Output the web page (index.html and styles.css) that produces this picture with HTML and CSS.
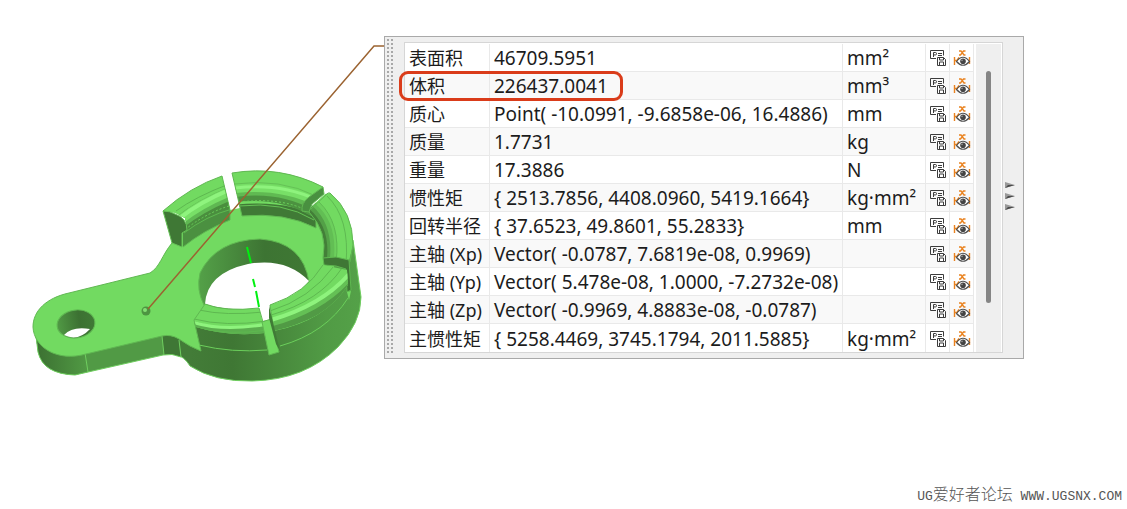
FILE: index.html
```html
<!DOCTYPE html>
<html lang="zh-CN">

<head>
    <meta charset="utf-8">
    <title>测量体</title>
    <link rel="stylesheet" href="styles.css">
</head>

<body>
    <svg width="0" height="0" class="Defs" aria-hidden="true">
        <symbol id="save" viewBox="0 0 18 18">
            <path d="M7 9.5H1.5v-8h13v5" fill="none" stroke="#3c3c3c" />
            <path d="M4.500 8V3.500h2q1 0 1 1.200t-1 1.200h-2M9 4.500h4M9 6.500h4" fill="none" stroke="#3c3c3c" />
            <path d="M8.500 8.500h6l2 2v6h-8z" fill="#fff" stroke="#3c3c3c" />
            <path d="M10.500 8.500v2.500h4v-2.500M10.500 16.500v-3.500h4v3.500" fill="none" stroke="#3c3c3c" />
        </symbol>
        <symbol id="eye" viewBox="0 0 18 18">
            <path d="M6 2h2l3 4h1.500M12.500 2h-2l-3 4H6M1.500 8v8M2 11.500h2l2-3M16.500 8v7" fill="none" stroke="#e9821f" stroke-width="1.400" />
            <path d="M3.500 12.500Q10 4 16.500 12.500Q10 20 3.500 12.500z" fill="#fff" stroke="#505050" stroke-width="1.200" />
            <circle cx="10" cy="12.300" r="2.800" fill="#444" />
            <circle cx="9" cy="11.400" r="0.800" fill="#999" />
        </symbol>
    </svg>
    <main class="Stage">
        <svg class="Model" viewBox="0 0 384 400" role="img" aria-label="零件模型">
            <defs>
                <linearGradient id="body" x1="190" x2="360" y1="0" y2="0" gradientUnits="userSpaceOnUse">
                    <stop offset="0" stop-color="#437c38" />
                    <stop offset="0.250" stop-color="#3f7734" />
                    <stop offset="0.800" stop-color="#519b45" />
                    <stop offset="1" stop-color="#54a148" />
                </linearGradient>
                <linearGradient id="arm" x1="37" x2="90" y1="0" y2="0" gradientUnits="userSpaceOnUse">
                    <stop offset="0" stop-color="#3c7132" />
                    <stop offset="1" stop-color="#529c45" />
                </linearGradient>
                <linearGradient id="bore" x1="198" x2="309" y1="0" y2="0" gradientUnits="userSpaceOnUse">
                    <stop offset="0" stop-color="#54a148" />
                    <stop offset="0.600" stop-color="#3d7433" />
                    <stop offset="1" stop-color="#3f7834" />
                </linearGradient>
                <linearGradient id="eyelet" x1="57" x2="95" y1="0" y2="0" gradientUnits="userSpaceOnUse">
                    <stop offset="0" stop-color="#519a45" />
                    <stop offset="0.600" stop-color="#3c7132" />
                    <stop offset="1" stop-color="#407936" />
                </linearGradient>
                <clipPath id="clipA"><path d="M163 211Q190 187 222 176L230 210V220Q204 230 183 247V232L187 228L185 218L175 213z" /></clipPath>
                <clipPath id="clipB"><path d="M232 173Q280 165 323 187L303 203L302 211L316 218V228Q285 212 242 216z" /></clipPath>
                <clipPath id="clipC"><path d="M330 193Q353 212 353 245L349 261L336 257L323 258Q328 232 309 212L311 207L325 194z" /></clipPath>
                <clipPath id="clipD"><path d="M323 265L347 270L348 285Q325 321 274 331L270 305Q306 293 323 265z" /></clipPath>
                <clipPath id="clipE"><path d="M205 304Q225 312 259 308L265 333Q228 337 196 327L194 320z" /></clipPath>
            </defs>

            <!-- side walls -->
            <path d="M178 330L176 355Q184 356 190 366Q215 382 252 381Q305 380 338 347Q361 323 361 297L353 240L300 200L200 260z" fill="url(#body)" stroke="#6fce5f" />
            <path d="M35 330L38 352Q43 374 75 375L88 372L163 355Q172 353 181 357L178 330z" fill="#519a45" />
            <path d="M35 330L38 352Q43 374 75 375L88 372L86 345z" fill="url(#arm)" />
            <path d="M162 334L164 355Q172 353 181 357L179 338z" fill="#3f7735" />
            <path d="M36 336L38 352Q43 374 75 375L88 372L163 355Q172 353 181 357M85 353L88 372M162 336L164 355M179 340L181 357" fill="none" stroke="#6fce5f" />

            <!-- arm and floor of the ring -->
            <path d="M33 327C33 311 46 298 69 293L150 273C160 267 162 255 172 243Q205 201 262 201Q320 206 336 248Q338 282 305 297L262 321L194 321L201 351Q190 347 179 339Q171 334 162 336L86 354C58 362 34 348 33 327z" fill="#72da61" />
            <path d="M172 243C162 255 160 267 150 273L69 293C46 298 33 311 33 327C34 348 58 362 86 354L162 336Q171 334 179 339Q190 347 201 351" fill="none" stroke="#60b852" />

            <!-- hole in the arm -->
            <ellipse cx="76" cy="324" rx="19" ry="14" fill="url(#eyelet)" stroke="#60b852" transform="rotate(-8 76 324)" />
            <path d="M64 335Q72 326 90 329Q78 342 64 335z" fill="#fff" />

            <!-- bore -->
            <path d="M204 305Q196 290 200 273Q216 240 260 239Q303 242 309 282L270 305L259 309Q225 312 204 305z" fill="url(#bore)" stroke="#60b852" />
            <path d="M205 304Q207 273 248 264Q286 257 309 281Q295 299 270 305L271 320L262 321L259 309Q225 311 205 304z" fill="#fff" />

            <!-- gap between the upper segments -->
            <path d="M221 176L234 172L240 208L230 210z" fill="#fff" />

            <!-- upper left segment -->
            <g clip-path="url(#clipA)" fill="none">
                <path d="M155 170H235V250H155z" fill="#72da61" />
                <path d="M179 246Q204 225 234 215" stroke="#4b9040" stroke-width="21" />
                <path d="M181 231Q204 213 235 201" stroke="#4a8e3e" stroke-width="7" />
                <path d="M180 222Q201 205 234 192" stroke="#5fb852" stroke-width="13" />
                <path d="M180 220Q201 203 234 190" stroke="#78df67" stroke-width="9" />
                <path d="M180 218Q201 201 234 188" stroke="#8ff47e" stroke-width="4" />
                <path d="M176 211Q195 197 229 184M184 233Q206 216 232 209" stroke="#5eb850" />
                <path d="M182 232Q205 213 232 205" stroke="#6bd05b" stroke-dasharray="2 2" />
            </g>
            <path d="M163 211Q170 211 175 214Q187 218 187 230L182 233V247L172 243z" fill="#3f7835" stroke="#65c256" />
            <path d="M163 211Q190 187 222 176L230 210V220Q204 230 183 247" fill="none" stroke="#60b852" />

            <!-- upper middle segment -->
            <g clip-path="url(#clipB)" fill="none">
                <path d="M230 165H328V230H230z" fill="#72da61" />
                <path d="M237 212Q287 207 321 226" stroke="#407a36" stroke-width="15" />
                <path d="M235 197Q280 192 312 211" stroke="#4c9240" stroke-width="10" />
                <path d="M235 192Q281 186 316 206" stroke="#60ba52" stroke-width="10" />
                <path d="M235 189Q281 184 317 202" stroke="#78df67" stroke-width="8" />
                <path d="M235 188Q281 183 317 200" stroke="#8ef37d" stroke-width="3" />
                <path d="M234 184Q281 178 316 196M239 206Q283 201 314 220" stroke="#65c256" />
                <path d="M239 202Q281 197 308 211" stroke="#6bd05b" stroke-dasharray="2 2" />
            </g>
            <path d="M242 216L232 173Q280 165 323 187" fill="none" stroke="#60b852" />
            <path d="M242 216Q285 212 316 228V218" fill="none" stroke="#60b852" />

            <!-- right segment -->
            <g clip-path="url(#clipC)" fill="none">
                <path d="M300 185H360V270H300z" fill="#72da61" />
                <path d="M307 209Q330 226 325 262" stroke="#437f38" stroke-width="6" />
                <path d="M311 207Q334 227 329 262" stroke="#53a047" stroke-width="5" />
                <path d="M314 204Q337 225 332 262" stroke="#62be54" stroke-width="5" />
                <path d="M317 203Q340 223 335 262" stroke="#6ccf5c" stroke-width="3" />
                <path d="M319 202Q341 223 336 262M327 196Q350 218 346 264" stroke="#5fb952" />
            </g>
            <path d="M311 209L328 193H330Q353 212 353 245L350 262M309 212Q328 232 323 258" fill="none" stroke="#60b852" />
            <path d="M323 187L324 194L312 204L309 212L302 211Q301 203 309 197z" fill="#499040" stroke="#60b852" />
            <path d="M323 258L336 257L349 260L351 290L347 292L346 269L336 266L324 265z" fill="#3f7735" stroke="#5eb850" />
            <path d="M347 292L351 291L349 300z" fill="#72da61" />

            <!-- front right segment -->
            <g clip-path="url(#clipD)" fill="none">
                <path d="M260 260H360V340H260z" fill="#72da61" />
                <path d="M352 282Q325 316 271 328" stroke="#519a45" stroke-width="7" />
                <path d="M350 276Q324 308 271 323" stroke="#64c055" stroke-width="7" />
                <path d="M350 273Q323 305 271 320" stroke="#8ef37d" stroke-width="4" />
                <path d="M334 266Q310 299 270 311M342 268Q320 301 271 315" stroke="#5eb850" />
            </g>
            <path d="M274 331L270 305Q306 293 323 265" fill="none" stroke="#60b852" />

            <!-- front left segment -->
            <g clip-path="url(#clipE)" fill="none">
                <path d="M190 300H268V340H190z" fill="#72da61" />
                <path d="M192 325Q223 336 267 328" stroke="#5bae4e" stroke-width="9" />
                <path d="M192 322Q223 332 267 324" stroke="#8ef37d" stroke-width="3" />
                <path d="M199 310Q225 316 264 312M194 319Q225 327 267 321M193 327Q228 336 268 330" stroke="#5eb850" />
            </g>
            <path d="M201 351L194 320L205 304Q225 312 259 308L263 322" fill="none" stroke="#60b852" />

            <!-- front slot -->
            <path d="M262 322L271 319L279 352L269 355z" fill="#72da61" stroke="#60b852" />
            <path d="M269 306L280 351L276 344L269 318z" fill="#407b36" />
            <path d="M199 345Q232 353 267 350M280 346Q326 333 348 298" fill="none" stroke="#6bcf5b" />

            <!-- axis and leader line -->
            <path d="M247 247L251 263M253 279L255 287M256 291L259 307" fill="none" stroke="#00f010" stroke-width="2" />
            <circle cx="146" cy="311" r="4.500" fill="#4d9541" />
            <circle cx="145" cy="310" r="2" fill="#83df73" />
            <path d="M148 309L374 46H384" fill="none" stroke="#9b6331" stroke-width="1.500" />
        </svg>

        <section class="Panel">
            <div class="Grip"></div>
            <div class="Frame">
                <table class="Results">
                    <colgroup>
                        <col class="NameCol">
                        <col>
                        <col class="UnitCol">
                        <col class="IconCol">
                        <col class="IconCol">
                    </colgroup>
                    <tbody id="T"></tbody>
                </table>
                <div class="Scroll"><div class="Thumb"></div></div>
            </div>
            <button class="More" aria-label="展开">
                <svg viewBox="0 0 12 32" width="12" height="32">
                    <path d="M1 2l10 3L1 8zM1 13l10 3L1 19zM1 24l10 3L1 30z" fill="#999" />
                    <path d="M1 8l10-3L4 5zM1 19l10-3L4 16zM1 30l10-3L4 27z" fill="#4a4a4a" />
                </svg>
            </button>
        </section>
    </main>
    <footer class="Mark">UG<span class="Han">爱好者论坛</span> WWW.UGSNX.COM</footer>
    <script>
        const T = document.getElementById("T");
        const rows = [
            ["表面积", "46709.5951", "mm²"],
            ["体积", "226437.0041", "mm³"],
            ["质心", "Point( -10.0991, -9.6858e-06, 16.4886)", "mm"],
            ["质量", "1.7731", "kg"],
            ["重量", "17.3886", "N"],
            ["惯性矩", "{ 2513.7856, 4408.0960, 5419.1664}", "kg·mm²"],
            ["回转半径", "{ 37.6523, 49.8601, 55.2833}", "mm"],
            ["主轴 (Xp)", "Vector( -0.0787, 7.6819e-08, 0.9969)", ""],
            ["主轴 (Yp)", "Vector( 5.478e-08, 1.0000, -7.2732e-08)", ""],
            ["主轴 (Zp)", "Vector( -0.9969, 4.8883e-08, -0.0787)", ""],
            ["主惯性矩", "{ 5258.4469, 3745.1794, 2011.5885}", "kg·mm²"]
        ];
        rows.forEach(
            function (r) {
                const cls = r[0] == "体积" ? ' class="Marked"' : "";
                T.insertAdjacentHTML("beforeend", `<tr${cls}>
                    <th scope="row">${r[0]}</th><td>${r[1]}</td><td>${r[2]}</td>
                    <td class="Tool"><button aria-label="保存${r[0]}"><svg><use href="#save"/></svg></button></td>
                    <td class="Tool"><button aria-label="显示${r[0]}"><svg><use href="#eye"/></svg></button></td>
                </tr>`);
            }
        );
    </script>
</body>

</html>
```
FILE: styles.css
```css
*,
*::after {
    box-sizing: border-box;
}

body {
    margin: 0;
    min-height: 100vh;
    display: flex;
    flex-direction: column;
    justify-content: space-between;
    background-color: white;
    color: #1c1c1c;
    font-family: "Noto Sans", "Noto Sans CJK SC", sans-serif;
}

.Defs {
    position: absolute;
}

.Stage {
    display: flex;
    align-items: flex-start;
}

.Model {
    flex: 0 0 384px;
}

.Panel {
    flex: 0 1 640px;
    margin-top: 36px;
    display: flex;
    background-color: #efefef;
    border: 1px solid #a9a9a9;
}

.Grip {
    width: 7px;
    margin: 2px 10px 4px 2px;
    background-image: conic-gradient(at 2px 2px, #efefef 75%, #a8a8a8 0);
    background-size: 4px 4px;
}

.Frame {
    flex: 1;
    display: flex;
    margin: 5px 0;
    padding-top: 1px;
    background-color: white;
    border: 1px solid #d6d6d6;
}

.Results {
    flex: 1;
    table-layout: fixed;
    border-collapse: separate;
    border-spacing: 0;
    font-size: 19px;
    line-height: 27px;
}

.NameCol {
    width: 85px;
}

.UnitCol {
    width: 83px;
}

.IconCol {
    width: 24px;
}

.Results tr:nth-child(even) {
    background-color: #f9f9f9;
}

.Results th,
.Results td {
    height: 28px;
    padding: 1px 0 0 4px;
    border-right: 1px solid #e9e9e9;
    border-bottom: 1px solid #e9e9e9;
    font-weight: normal;
    text-align: left;
    white-space: nowrap;
    line-height: 26px;
}

.Results th {
    font-size: 18px;
}

.Results tr:last-child > * {
    border-bottom: 0;
}

.Results .Tool {
    padding: 1px 0 0 3px;
}

.Tool button {
    display: block;
    padding: 0;
    border: 0;
    background: none;
}

.Tool svg {
    display: block;
    width: 18px;
    height: 18px;
}

.Marked th {
    position: relative;
}

/* red ring round the volume row */
.Marked th::after {
    content: "";
    position: absolute;
    left: -6px;
    top: -1px;
    width: 224px;
    height: 30px;
    border: 3px solid #da3c1a;
    border-radius: 9px;
}

.Scroll {
    width: 25px;
    margin: 0 1px 0 2px;
    padding: 27px 0 49px 10px;
    background-color: #efefef;
}

.Thumb {
    width: 5px;
    height: 100%;
    border-radius: 3px;
    background-color: #858585;
}

.More {
    width: 20px;
    padding: 0 0 0 1px;
    border: 0;
    background: none;
    text-align: left;
}

.Mark {
    padding: 0 5px 2px 0;
    color: #555;
    font-family: "Liberation Mono", "Noto Sans CJK SC", monospace;
    font-size: 13px;
    line-height: 20px;
    text-align: right;
}

.Han {
    font-size: 16px;
    font-weight: 300;
}
```
